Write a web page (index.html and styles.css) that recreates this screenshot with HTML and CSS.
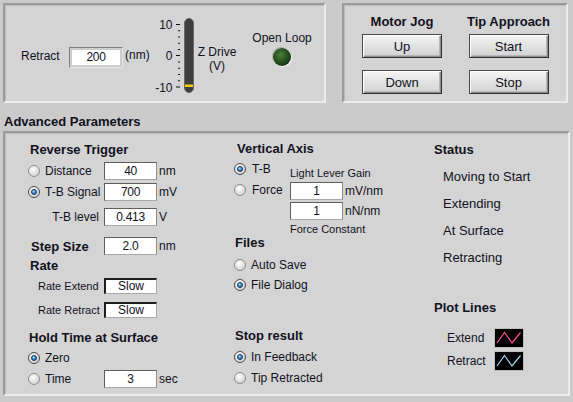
FILE: index.html
```html
<!DOCTYPE html>
<html>
<head>
<meta charset="utf-8">
<link rel="stylesheet" href="styles.css">
</head>
<body>
<div class="app">
  <div class="top">
    <div class="panel p-retract">
      <span class="lbl retract-lbl">Retract</span>
      <div class="bigbox">200</div>
      <span class="lbl nm-unit">(nm)</span>
      <svg class="zscale" width="40" height="82" viewBox="0 0 40 82">
        <g class="ticks" stroke="#111" stroke-width="1">
          <line x1="21" y1="9.5" x2="25" y2="9.5"/>
          <line x1="23" y1="15.75" x2="25" y2="15.75"/>
          <line x1="23" y1="22" x2="25" y2="22"/>
          <line x1="23" y1="28.25" x2="25" y2="28.25"/>
          <line x1="23" y1="34.5" x2="25" y2="34.5"/>
          <line x1="21" y1="40.5" x2="25" y2="40.5"/>
          <line x1="23" y1="47" x2="25" y2="47"/>
          <line x1="23" y1="53.25" x2="25" y2="53.25"/>
          <line x1="23" y1="59.5" x2="25" y2="59.5"/>
          <line x1="23" y1="65.75" x2="25" y2="65.75"/>
          <line x1="21" y1="72" x2="25" y2="72"/>
        </g>
        <text class="sc" x="17.5" y="14" text-anchor="end">10</text>
        <text class="sc" x="17.5" y="45" text-anchor="end">0</text>
        <text class="sc" x="17.5" y="76.5" text-anchor="end">-10</text>
        <rect x="29.5" y="3.5" width="9" height="74" rx="4.5" fill="#3e3e3e" stroke="#6a6a6a" stroke-width="1"/>
        <rect x="30" y="69.5" width="8" height="2.5" fill="#f2d000"/>
      </svg>
      <div class="zlabel"><span>Z Drive</span><span>(V)</span></div>
      <div class="ledwrap">
        <span class="lbl">Open Loop</span>
        <span class="led"></span>
      </div>
    </div>
    <div class="panel p-jog">
      <div class="jogcol">
        <div class="hdr center">Motor Jog</div>
        <button class="btn first">Up</button>
        <button class="btn">Down</button>
      </div>
      <div class="jogcol wide">
        <div class="hdr center">Tip Approach</div>
        <button class="btn first">Start</button>
        <button class="btn">Stop</button>
      </div>
    </div>
  </div>

  <div class="section-title">Advanced Parameters</div>

  <div class="panel p-adv">
    <div class="col c1">
      <div class="hdr h-rev">Reverse Trigger</div>
      <div class="row r-dist">
        <div class="rlabel"><span class="radio"></span><span class="lbl">Distance</span></div>
        <div class="num">40</div><span class="lbl unit">nm</span>
      </div>
      <div class="row r-tb">
        <div class="rlabel"><span class="radio on"></span><span class="lbl">T-B Signal</span></div>
        <div class="num">700</div><span class="lbl unit">mV</span>
      </div>
      <div class="row r-level">
        <div class="rlabel right"><span class="lbl">T-B level</span></div>
        <div class="num">0.413</div><span class="lbl unit">V</span>
      </div>
      <div class="row r-step">
        <div class="rlabel"><span class="hdr inline">Step Size</span></div>
        <div class="num">2.0</div><span class="lbl unit">nm</span>
      </div>
      <div class="hdr h-rate">Rate</div>
      <div class="row r-ext">
        <div class="rlabel"><span class="lbl small">Rate Extend</span></div>
        <div class="ring">Slow</div>
      </div>
      <div class="row r-ret">
        <div class="rlabel"><span class="lbl small">Rate Retract</span></div>
        <div class="ring">Slow</div>
      </div>
      <div class="hdr h-hold">Hold Time at Surface</div>
      <div class="row r-zero">
        <div class="rlabel"><span class="radio on"></span><span class="lbl">Zero</span></div>
      </div>
      <div class="row r-time">
        <div class="rlabel"><span class="radio"></span><span class="lbl">Time</span></div>
        <div class="num">3</div><span class="lbl unit">sec</span>
      </div>
    </div>

    <div class="col c2">
      <div class="hdr h-vert">Vertical Axis</div>
      <div class="vaxis">
        <div class="vradios">
          <div class="row r-tb2"><span class="radio on"></span><span class="lbl">T-B</span></div>
          <div class="row r-force"><span class="radio"></span><span class="lbl">Force</span></div>
        </div>
        <div class="gain">
          <div class="lbl small gl">Light Lever Gain</div>
          <div class="row g1"><div class="num">1</div><span class="lbl unit">mV/nm</span></div>
          <div class="row g2"><div class="num">1</div><span class="lbl unit">nN/nm</span></div>
          <div class="lbl small fc">Force Constant</div>
        </div>
      </div>
      <div class="hdr h-files">Files</div>
      <div class="row r-auto"><span class="radio"></span><span class="lbl">Auto Save</span></div>
      <div class="row r-dlg"><span class="radio on"></span><span class="lbl">File Dialog</span></div>
      <div class="hdr h-stop">Stop result</div>
      <div class="row r-fb"><span class="radio on"></span><span class="lbl">In Feedback</span></div>
      <div class="row r-tip"><span class="radio"></span><span class="lbl">Tip Retracted</span></div>
    </div>

    <div class="col c3">
      <div class="hdr h-status">Status</div>
      <ul class="status">
        <li>Moving to Start</li>
        <li>Extending</li>
        <li>At Surface</li>
        <li>Retracting</li>
      </ul>
      <div class="hdr h-plot">Plot Lines</div>
      <div class="row legend l-ext">
        <span class="lbl">Extend</span>
        <svg class="plot" width="28" height="18" viewBox="0 0 28 18"><rect width="28" height="18" fill="#000"/><polyline points="2,14 9.5,3.5 17,14 25.5,3.5" fill="none" stroke="#ff4f9a" stroke-width="1.2"/></svg>
      </div>
      <div class="row legend l-ret">
        <span class="lbl">Retract</span>
        <svg class="plot" width="28" height="18" viewBox="0 0 28 18"><rect width="28" height="18" fill="#000"/><polyline points="2,14 9.5,3.5 17,14 25.5,3.5" fill="none" stroke="#9ed6f5" stroke-width="1.2"/></svg>
      </div>
    </div>
  </div>
</div>
</body>
</html>
```

FILE: styles.css
```css
* { box-sizing: border-box; }
html, body { margin: 0; padding: 0; }
body {
  width: 573px;
  height: 402px;
  overflow: hidden;
  background: #cbcbcb;
  font-family: "Liberation Sans", Arial, sans-serif;
  font-size: 12px;
  color: #12121c;
}
.app { padding: 3px 0 0 3px; }

.panel {
  background: #d4d4d4;
  border: 2px solid;
  border-color: #9c9c9c #ececec #ececec #9c9c9c;
  box-shadow: inset 1px 1px 0 #bababa;
}

.top { display: flex; gap: 16px; }

.lbl { font-size: 12px; line-height: 14px; white-space: nowrap; }
.lbl.small { font-size: 11px; line-height: 13px; }

.hdr {
  font-weight: bold;
  font-size: 13px;
  line-height: 15px;
  white-space: nowrap;
}
.hdr.center { text-align: center; }

/* Retract panel */
.p-retract {
  width: 323px;
  height: 100px;
  display: flex;
  align-items: flex-start;
}
.retract-lbl { margin: 44px 0 0 16px; width: 48px; }
.bigbox {
  margin-top: 42px;
  width: 54px;
  height: 21px;
  background: #fff;
  border: 1px solid;
  border-color: #7c7c7c #e4e4e4 #e4e4e4 #7c7c7c;
  box-shadow: inset 0 0 0 2px #cdcdcd;
  text-align: center;
  font-size: 12px;
  letter-spacing: -0.3px;
  line-height: 19px;
}
.nm-unit { margin: 43px 0 0 2px; }
.zscale { margin: 10px 0 0 5px; display: block; }
.zscale .sc { font-family: "Liberation Sans", Arial, sans-serif; font-size: 12px; fill: #12121c; }
.zlabel {
  margin: 40px 0 0 3px;
  display: flex;
  flex-direction: column;
  align-items: center;
  line-height: 14px;
}
.ledwrap {
  margin: 26px 0 0 16px;
  display: flex;
  flex-direction: column;
  align-items: center;
}
.led {
  margin-top: 3px;
  width: 18px;
  height: 18px;
  border-radius: 50%;
  background: radial-gradient(circle at 42% 38%, #4f7d3f 0%, #2a5520 40%, #143010 80%, #0c1f0a 100%);
  box-shadow: 1px 1px 1px #f4f4f4, -1px -1px 1px #a8a8a8;
}

/* Jog panel */
.p-jog {
  width: 226px;
  height: 100px;
  display: flex;
  gap: 25px;
  padding: 9px 0 0 18px;
}
.jogcol { width: 80px; display: flex; flex-direction: column; align-items: center; }
.jogcol.wide { width: 83px; }
.btn {
  display: block;
  margin: 12px 0 0 0;
  padding: 0;
  width: 80px;
  height: 24px;
  border: 1px solid;
  border-color: #4a4a4a #2e2e2e #2e2e2e #4a4a4a;
  background: linear-gradient(#f6f6f6, #e2e2e2 50%, #d2d2d2);
  box-shadow: inset 1px 1px 0 #ffffff, inset -1px -1px 0 #8e8e8e, inset -2px -2px 0 #b6b6b6;
  font-family: "Liberation Sans", Arial, sans-serif;
  font-size: 13px;
  color: #12121c;
}
.btn.first { margin-top: 5px; }

/* Section */
.section-title {
  margin: 11px 0 0 1px;
  font-weight: bold;
  font-size: 13px;
  line-height: 15px;
}
.p-adv {
  margin-top: 2px;
  width: 567px;
  height: 265px;
  display: flex;
  align-items: flex-start;
}
.col { display: flex; flex-direction: column; }
.c1 { margin-left: 23px; width: 206px; }
.c2 { width: 200px; }
.c3 { flex: 1; }

.row { display: flex; align-items: center; height: 18px; }
.rlabel { width: 76px; display: flex; align-items: center; gap: 5px; }
.rlabel.right { justify-content: flex-end; padding-right: 5px; }
.unit { margin-left: 2px; }

.radio {
  flex: none;
  position: relative;
  width: 12px;
  height: 12px;
  border-radius: 50%;
  border: 1px solid #8e8e8e;
  background: radial-gradient(circle at 40% 35%, #ffffff 0%, #e6e6e6 45%, #c6c6c6 100%);
}
.radio.on { border-color: #4a4a4a; }
.radio.on::after {
  content: "";
  position: absolute;
  left: 2px;
  top: 2px;
  width: 6px;
  height: 6px;
  border-radius: 50%;
  box-sizing: border-box;
  border: 1px solid #16324e;
  background: radial-gradient(circle at 40% 35%, #bfe6ff 0%, #3a95e0 45%, #15569a 100%);
}

.num {
  width: 53px;
  height: 18px;
  background: #fff;
  border: 1px solid;
  border-color: #5e5e5e #8c8c8c #a8a8a8 #5e5e5e;
  text-align: center;
  font-size: 12px;
  letter-spacing: -0.3px;
  line-height: 16px;
}
.ring {
  width: 53px;
  height: 16px;
  background: #fff;
  border-style: solid;
  border-width: 2px 1px 1px 2px;
  border-color: #1e1e1e #a8a8a8 #a8a8a8 #1e1e1e;
  text-align: center;
  font-size: 12px;
  line-height: 13px;
}

/* Column 1 positions */
.h-rev { margin-top: 9px; padding-left: 2px; }
.r-dist { margin-top: 5px; }
.r-tb { margin-top: 3px; }
.r-level { margin-top: 7px; }
.r-step { margin-top: 11px; }
.r-step .hdr { padding-left: 3px; }
.h-rate { margin-top: 3px; padding-left: 2px; }
.r-ext { margin-top: 5px; height: 16px; }
.r-ret { margin-top: 8px; height: 16px; }
.r-ext .rlabel, .r-ret .rlabel { padding-left: 10px; }
.h-hold { margin-top: 12px; padding-left: 1px; }
.r-zero { margin-top: 4px; }
.r-time { margin-top: 3px; }

/* Column 2 */
.h-vert { margin-top: 8px; padding-left: 3px; }
.vaxis { display: flex; margin-top: 4px; }
.vradios { width: 56px; display: flex; flex-direction: column; }
.vradios .row { gap: 6px; }
.r-force { margin-top: 3px; }
.gain { display: flex; flex-direction: column; padding-top: 7px; }
.g1, .g2 { margin-top: 2px; }
.fc { margin-top: 3px; line-height: 11px; }
.h-files { margin-top: -1px; padding-left: 1px; }
.c2 > .row { gap: 5px; }
.r-auto { margin-top: 6px; }
.r-dlg { margin-top: 2px; }
.h-stop { margin-top: 34px; padding-left: 1px; }
.r-fb { margin-top: 5px; }
.r-tip { margin-top: 3px; }

/* Column 3 */
.h-status { margin-top: 9px; }
.status {
  list-style: none;
  margin: 6px 0 0 0;
  padding: 0 0 0 9px;
  font-size: 13px;
  line-height: 27px;
}
.h-plot { margin-top: 29px; }
.legend { padding-left: 13px; }
.legend .lbl { width: 48px; }
.l-ext { margin-top: 14px; }
.l-ret { margin-top: 5px; }
.plot {
  display: block;
  outline: 1px solid #bdbdbd;
}
```
